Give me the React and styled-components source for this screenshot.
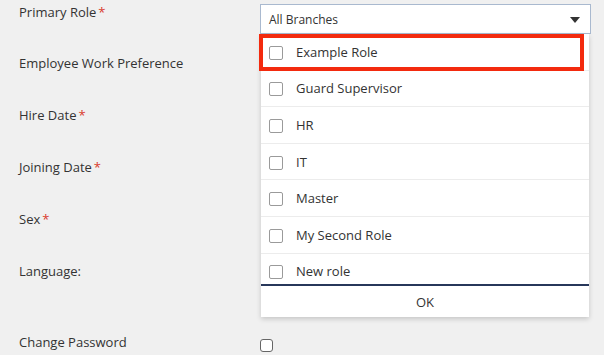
import React from 'react';
import styled, { createGlobalStyle } from 'styled-components';

// +++++++++ CSS +++++++++

const Global = createGlobalStyle`
	html, body {
		margin: 0;
		padding: 0;
		background: #f0f0f0;
		font-family: "Open Sans", "Liberation Sans", sans-serif;
		color: #333;
	}
`;

const Page = styled.div`
	position: relative;
	width: 604px;
	height: 355px;
	overflow: hidden;
	padding-left: 19px;
	box-sizing: border-box;
`;

const Row = styled.div`
	display: grid;
	grid-template-columns: 241px 331px;
	height: ${p => p.h}px;
	align-items: start;
`;

const Label = styled.div`
	font-size: 13px;
	line-height: 20px;
	padding-top: ${p => p.top || 0}px;
	white-space: nowrap;
`;

const Star = styled.span`
	color: #d93a2b;
	margin-left: 2px;
`;

const SelectWrap = styled.div`
	position: relative;
	margin-top: 4px;
`;

const Select = styled.div`
	height: 30px;
	box-sizing: border-box;
	border: 1px solid #a9b9cf;
	background: #fff;
	display: flex;
	align-items: center;
	justify-content: space-between;
	padding: 0 10px 0 8px;
	font-size: 12px;
`;

const Caret = styled.span`
	width: 0;
	height: 0;
	border-left: 5px solid transparent;
	border-right: 5px solid transparent;
	border-top: 6px solid #333;
	margin-top: 1px;
`;

const Menu = styled.div`
	position: absolute;
	top: 30px;
	left: 1px;
	width: 328px;
	background: #fff;
	box-shadow: 0 2px 5px rgba(0, 0, 0, 0.18);
	z-index: 2;
`;

const List = styled.div`
	height: 250px;
	overflow: hidden;
`;

const Option = styled.div`
	display: flex;
	align-items: center;
	height: 36.6px;
	box-sizing: border-box;
	border-bottom: 1px solid #ececec;
	padding-left: 8px;
	font-size: 13px;
	color: #333;
`;

const Box = styled.span`
	width: 14px;
	height: 14px;
	box-sizing: border-box;
	border: 1px solid #9a9a9a;
	border-radius: 2px;
	background: #fff;
	margin-right: 13px;
	margin-top: 2px;
	flex: none;
`;

const Footer = styled.div`
	height: 33px;
	border-top: 2px solid #27375a;
	box-sizing: border-box;
	display: flex;
	align-items: center;
	justify-content: center;
	font-size: 13px;
	color: #333;
`;

const Highlight = styled.div`
	position: absolute;
	top: 34px;
	left: 259px;
	width: 325px;
	height: 37px;
	box-sizing: border-box;
	border: 4px solid #f32a0e;
	z-index: 3;
	pointer-events: none;
`;

const PlainBox = styled(Box)`
	display: block;
	margin-top: 7px;
	border-radius: 3px;
	width: 13px;
	height: 13px;
	border-color: #666;
`;

// +++++++++ COMPONENT +++++++++

const roles = ['Example Role', 'Guard Supervisor', 'HR', 'IT', 'Master', 'My Second Role', 'New role'];

const fields = [
	{ label: 'Employee Work Preference', required: false, h: 52 },
	{ label: 'Hire Date', required: true, h: 52 },
	{ label: 'Joining Date', required: true, h: 52 },
	{ label: 'Sex', required: true, h: 52 },
	{ label: 'Language:', required: false, h: 71 },
];

export default function App() {
	return (
		<Page>
			<Global />
			<Row h={53}>
				<Label top={2}>Primary Role<Star>*</Star></Label>
				<SelectWrap>
					<Select>
						All Branches
						<Caret />
					</Select>
					<Menu>
						<List>
							{roles.map(r => (
								<Option key={r}>
									<Box />
									{r}
								</Option>
							))}
						</List>
						<Footer>OK</Footer>
					</Menu>
				</SelectWrap>
			</Row>
			{fields.map(f => (
				<Row key={f.label} h={f.h}>
					<Label>
						{f.label}
						{f.required && <Star>*</Star>}
					</Label>
				</Row>
			))}
			<Row h={40}>
				<Label>Change Password</Label>
				<PlainBox />
			</Row>
			<Highlight />
		</Page>
	);
}
